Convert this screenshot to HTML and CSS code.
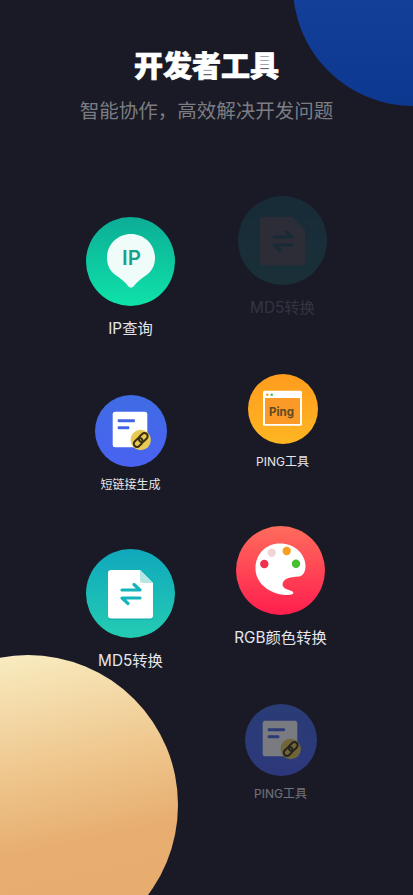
FILE: index.html
```html
<!DOCTYPE html>
<html lang="zh-CN">
<head>
<meta charset="utf-8">
<title>开发者工具</title>
<link rel="stylesheet" href="styles.css">
</head>
<body>
<main class="screen">
  <div class="orb orb-blue"></div>
  <div class="orb orb-gold"></div>

  <header class="head">
    <h1 class="title">开发者工具</h1>
    <p class="sub">智能协作，高效解决开发问题</p>
  </header>

  <section class="tools">
    <div class="col col-left">
      <div class="tool tool-lg">
        <svg class="icon icon-lg" viewBox="0 0 89 89">
          <defs>
            <linearGradient id="gIp" x1="0" y1="0" x2="0" y2="1"><stop offset="0" stop-color="#0cad96"/><stop offset="1" stop-color="#0fe2a9"/></linearGradient>
          </defs>
          <circle cx="44.5" cy="44.5" r="44.5" fill="url(#gIp)"/>
          <path d="M45 17C58.5 17 69 27.5 69 41C69 48 66 54 60.5 58C55 61.5 51 65 47.5 69.5C46.3 71 43.7 71 42.5 69.5C39 65 35 61.5 29.5 58C24 54 21 48 21 41C21 27.5 31.5 17 45 17Z" fill="#f0fcf9"/>
          <text class="ip-text" x="45.5" y="48.3" text-anchor="middle">IP</text>
        </svg>
        <span class="label-lg">IP查询</span>
      </div>

      <div class="tool tool-sm">
        <svg class="icon icon-sm" viewBox="0 0 72 72">
          <defs><linearGradient id="gLink" x1="0" y1="0" x2="0" y2="1"><stop offset="0" stop-color="#3f6ce4"/><stop offset="1" stop-color="#4a62f2"/></linearGradient></defs>
          <circle cx="36" cy="36" r="36" fill="url(#gLink)"/>
          <rect x="17.7" y="16.7" width="34.6" height="35.6" rx="2.5" fill="#fff"/>
          <rect x="22.7" y="24.2" width="17.3" height="3" rx="1" fill="#4464e8"/>
          <rect x="22.7" y="31.2" width="11.6" height="3" rx="1" fill="#4464e8"/>
          <circle cx="45.7" cy="45" r="10.2" fill="#e8ca52"/>
          <g transform="rotate(-45 45.7 45)" fill="none" stroke="#3a2f10" stroke-width="2">
            <rect x="37.2" y="41.8" width="10" height="6.4" rx="3.2"/>
            <rect x="44.2" y="41.8" width="10" height="6.4" rx="3.2"/>
          </g>
        </svg>
        <span class="label-sm">短链接生成</span>
      </div>

      <div class="tool tool-lg">
        <svg class="icon icon-lg" viewBox="0 0 89 89">
          <defs><linearGradient id="gMd" x1="0" y1="0" x2="0" y2="1"><stop offset="0" stop-color="#10a8bc"/><stop offset="1" stop-color="#24ccb2"/></linearGradient></defs>
          <circle cx="44.5" cy="44.5" r="44.5" fill="url(#gMd)"/>
          <path d="M25 23H54L67 36V68A3 3 0 0 1 64 71H25A3 3 0 0 1 22 68V26A3 3 0 0 1 25 23Z" fill="#12a0ac" opacity=".55"/>
          <path d="M25 21H54L67 34V66.5A3 3 0 0 1 64 69.5H25A3 3 0 0 1 22 66.5V24A3 3 0 0 1 25 21Z" fill="#fff"/>
          <path d="M54 21L67 34H57A3 3 0 0 1 54 31Z" fill="#b6e6e4"/>
          <g fill="none" stroke="#14b4bc" stroke-width="3.2" stroke-linecap="round" stroke-linejoin="round">
            <path d="M36 41H54L48 35.5"/>
            <path d="M54 49H36L42 54.5"/>
          </g>
        </svg>
        <span class="label-lg">MD5转换</span>
      </div>
    </div>

    <div class="col">
      <div class="tool tool-lg ghost-strong">
        <svg class="icon icon-lg" viewBox="0 0 89 89">
          <defs><linearGradient id="gMd2" x1="0" y1="0" x2="0" y2="1"><stop offset="0" stop-color="#10a8bc"/><stop offset="1" stop-color="#24ccb2"/></linearGradient></defs>
          <circle cx="44.5" cy="44.5" r="44.5" fill="url(#gMd2)"/>
          <path d="M25 21H54L67 34V66.5A3 3 0 0 1 64 69.5H25A3 3 0 0 1 22 66.5V24A3 3 0 0 1 25 21Z" fill="#bdb4b4"/>
          <path d="M54 21L67 34H57A3 3 0 0 1 54 31Z" fill="#9ababa"/>
          <g fill="none" stroke="#14a0a8" stroke-width="3.2" stroke-linecap="round" stroke-linejoin="round">
            <path d="M36 41H54L48 35.5"/>
            <path d="M54 49H36L42 54.5"/>
          </g>
        </svg>
        <span class="label-lg">MD5转换</span>
      </div>

      <div class="tool tool-sm">
        <svg class="icon icon-ping" viewBox="0 0 70 70">
          <defs><linearGradient id="gPing" x1="0" y1="0" x2="0" y2="1"><stop offset="0" stop-color="#ff9c1e"/><stop offset="1" stop-color="#ffb622"/></linearGradient></defs>
          <circle cx="35" cy="35" r="35" fill="url(#gPing)"/>
          <rect x="15" y="16.7" width="39" height="35" rx="1.5" fill="#fff"/>
          <rect x="17" y="24" width="35" height="26" fill="#fb9a26"/>
          <circle cx="19.3" cy="20.7" r="1.3" fill="#f0a030"/>
          <circle cx="23.7" cy="20.7" r="1.3" fill="#3cc04a"/>
          <text class="ping-text" x="33.5" y="41.7" text-anchor="middle">Ping</text>
        </svg>
        <span class="label-sm">PING工具</span>
      </div>

      <div class="tool tool-lg shift-left">
        <svg class="icon icon-lg" viewBox="0 0 89 89">
          <defs><linearGradient id="gRgb" x1="0" y1="0" x2="0" y2="1"><stop offset="0" stop-color="#ff6c5c"/><stop offset="1" stop-color="#ff1e4e"/></linearGradient></defs>
          <circle cx="44.5" cy="44.5" r="44.5" fill="url(#gRgb)"/>
          <path d="M44 17.5C58.5 17.5 69.5 28 69.5 40C69.5 47 66 50 63 50.5C58 51.2 54 50.8 50.5 52.7C47 54.8 45.5 58 47.5 61C49.5 63.8 55 64 57 66C58.5 68 55 69.3 50 69C33 68 19.5 57 19.5 42.5C19.5 28 30 17.5 44 17.5Z" fill="#fff"/>
          <circle cx="35.7" cy="26.7" r="4.2" fill="#f0d4d8"/>
          <circle cx="50.7" cy="25" r="4.2" fill="#f7a020"/>
          <circle cx="28.3" cy="38" r="4.2" fill="#f0304c"/>
          <circle cx="60" cy="37.7" r="4.2" fill="#46c030"/>
        </svg>
        <span class="label-lg">RGB颜色转换</span>
      </div>

      <div class="tool tool-sm ghost shift-left">
        <svg class="icon icon-sm" viewBox="0 0 72 72">
          <defs><linearGradient id="gLink2" x1="0" y1="0" x2="0" y2="1"><stop offset="0" stop-color="#3f6ce4"/><stop offset="1" stop-color="#4a62f2"/></linearGradient></defs>
          <circle cx="36" cy="36" r="36" fill="url(#gLink2)"/>
          <rect x="17.7" y="16.7" width="34.6" height="35.6" rx="2.5" fill="#fff"/>
          <rect x="22.7" y="24.2" width="17.3" height="3" rx="1" fill="#4464e8"/>
          <rect x="22.7" y="31.2" width="11.6" height="3" rx="1" fill="#4464e8"/>
          <circle cx="45.7" cy="45" r="10.2" fill="#e8ca52"/>
          <g transform="rotate(-45 45.7 45)" fill="none" stroke="#3a2f10" stroke-width="2">
            <rect x="37.2" y="41.8" width="10" height="6.4" rx="3.2"/>
            <rect x="44.2" y="41.8" width="10" height="6.4" rx="3.2"/>
          </g>
        </svg>
        <span class="label-sm">PING工具</span>
      </div>
    </div>
  </section>
</main>
</body>
</html>
```

FILE: styles.css
```css
* { box-sizing: border-box; }

html, body {
  margin: 0;
  padding: 0;
  background: #191a26;
}

.screen {
  position: relative;
  width: 413px;
  height: 895px;
  overflow: hidden;
  background: #191a26;
  font-family: Inter, "Noto Sans CJK SC", sans-serif;
  color: #e6e6ea;
}

.orb {
  position: absolute;
  border-radius: 50%;
}

.orb-blue {
  width: 240px;
  height: 240px;
  left: 293px;
  top: -134px;
  background: linear-gradient(180deg, #15409a 50%, #0d3890 100%);
}

.orb-gold {
  width: 300px;
  height: 300px;
  left: -122px;
  top: 655px;
  background: linear-gradient(168deg, #f8ebbf 8%, #eec48a 43%, #e7ae70 63%, #e6ac6c 100%);
}

.head {
  position: relative;
  padding-top: 44px;
  text-align: center;
}

.title {
  margin: 0;
  font-family: "Noto Sans CJK SC", sans-serif;
  font-size: 29px;
  line-height: 40px;
  font-weight: 900;
  color: #fff;
  -webkit-text-stroke: 0.7px #fff;
}

.sub {
  margin: 12px 0 0;
  font-family: "Noto Sans CJK SC", sans-serif;
  font-size: 19.5px;
  line-height: 28px;
  font-weight: 400;
  color: #7c7d82;
}

.tools {
  position: relative;
  display: grid;
  grid-template-columns: 152px 152px;
  padding: 72px 0 0 54.5px;
}

.col {
  display: flex;
  flex-direction: column;
  align-items: center;
  gap: 56px;
}

.col-left {
  padding-top: 21px;
}

.tool {
  display: flex;
  flex-direction: column;
  align-items: center;
}

.shift-left {
  margin-left: -4px;
}

.icon {
  display: block;
  flex: none;
}

.icon-lg { width: 89px; height: 89px; }
.icon-sm { width: 72px; height: 72px; }
.icon-ping { width: 70px; height: 70px; }

.label-lg {
  margin-top: 13px;
  font-size: 15.3px;
  line-height: 20px;
  font-weight: 400;
  white-space: nowrap;
}

.label-sm {
  margin-top: 10px;
  font-size: 12px;
  line-height: 16px;
  font-weight: 400;
  white-space: nowrap;
}

.ghost-strong { opacity: 0.12; }
.ghost { opacity: 0.42; }

.ip-text {
  font-family: Inter, sans-serif;
  font-size: 20.5px;
  font-weight: 600;
  fill: #17a287;
}

.ping-text {
  font-family: Inter, sans-serif;
  font-size: 11.5px;
  font-weight: 700;
  fill: #5f4a24;
}
```
